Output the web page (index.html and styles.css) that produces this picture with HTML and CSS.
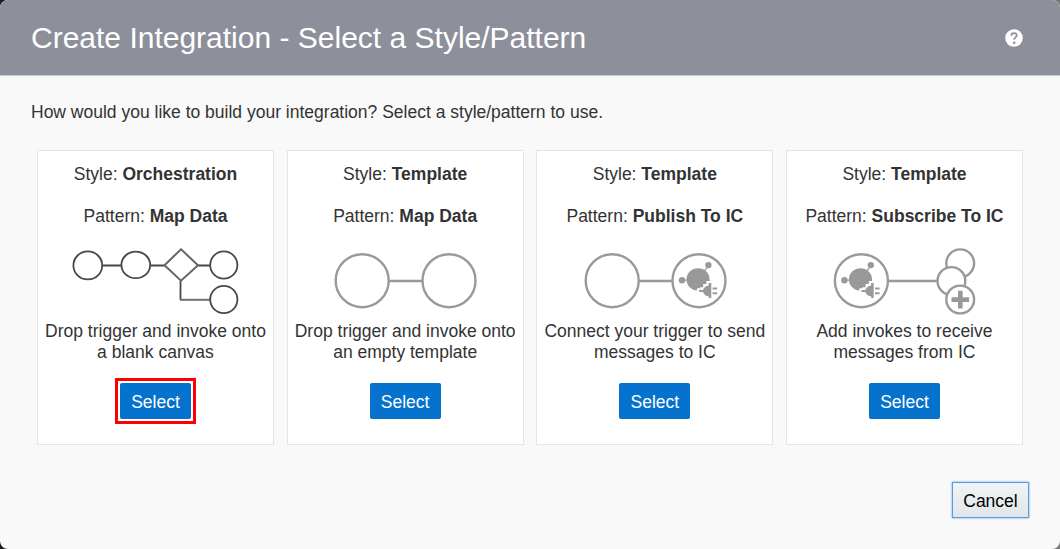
FILE: index.html
```html
<!DOCTYPE html>
<html lang="en">
<head>
<meta charset="utf-8">
<title>Create Integration</title>
<link rel="stylesheet" href="styles.css">
</head>
<body>
<main class="dialog">
  <header class="header">
    <h1 class="title">Create Integration - Select a Style/Pattern</h1>
    <svg class="help" viewBox="0 0 18 18" role="img" aria-label="Help"><circle cx="9" cy="9" r="8.8" fill="#fff"/><path d="M6.3 6.7C6.3 4.9 7.4 4.2 9 4.2s2.7.8 2.7 2.3c0 1.9-2.5 2-2.5 4.2" fill="none" stroke="#8d8f9b" stroke-width="1.8"/><circle cx="9.2" cy="13.7" r="1.3" fill="#8d8f9b"/></svg>
  </header>
  <p class="intro">How would you like to build your integration? Select a style/pattern to use.</p>
  <section class="cards">
    <article class="card">
      <p class="line">Style: <b>Orchestration</b></p>
      <p class="line">Pattern: <b>Map Data</b></p>
      <svg class="diagram" viewBox="37 240 237 80">
        <g fill="none" stroke="#484848" stroke-width="1.8">
          <path d="M102 265.5h19.5M150 265.5h14.5M198 265.5h12M180.5 281v19"/>
          <path d="M180 299.8h30" stroke="#707070" stroke-width="2"/>
          <path d="M181 249.3l17 15.9-17 15.5-16.5-15.5z" stroke="#666" stroke-width="2"/>
          <ellipse cx="87.8" cy="265.4" rx="14.4" ry="14"/><ellipse cx="135.8" cy="264.9" rx="14.4" ry="13.3"/>
          <circle cx="223.8" cy="265" r="13.6"/><circle cx="223.8" cy="299.5" r="13.6"/>
        </g>
      </svg>
      <p class="desc">Drop trigger and invoke onto<br>a blank canvas</p>
      <div class="ring"><button class="select">Select</button></div>
    </article>
    <article class="card">
      <p class="line">Style: <b>Template</b></p>
      <p class="line">Pattern: <b>Map Data</b></p>
      <svg class="diagram" viewBox="287 240 237 80">
        <g fill="none" stroke="#999" stroke-width="2.4"><circle cx="362.2" cy="280.7" r="26.5"/><circle cx="449" cy="280.7" r="26.5"/><path d="M389 281h33"/></g>
      </svg>
      <p class="desc">Drop trigger and invoke onto<br>an empty template</p>
      <div class="ring plain"><button class="select">Select</button></div>
    </article>
    <article class="card">
      <p class="line">Style: <b>Template</b></p>
      <p class="line">Pattern: <b>Publish To IC</b></p>
      <svg class="diagram" viewBox="536 240 237 80">
        <defs>
          <g id="adapter">
            <circle r="26.5" fill="none" stroke="#999" stroke-width="2.4"/>
            <path d="M-17 -.5H-9M5 -9L9.5 -15" fill="none" stroke="#999" stroke-width="1.3"/>
            <circle cx="-17" cy="-.5" r="3.2" fill="#999"/><circle cx="9.4" cy="-15.6" r="3.2" fill="#999"/>
            <path d="M-.6 -12.5A11.2 11.2 0 0 1 10.6 -1.3V.2H7.4V3.4H4.2V6.6H1V7.6H-2V9.9A11.2 11.2 0 0 1 -.6 -12.5z" fill="#999"/>
            <path d="M0 9.3H4Q5.2 5.4 9.7 4.8V2.4H12.3V17.4H9.7V15.6Q5.2 15.2 4 11.3H0z" fill="#999"/>
            <path d="M13.6 7.8H18.2M13.6 12.5H18.2" stroke="#999" stroke-width="2"/>
          </g>
        </defs>
        <circle cx="612.2" cy="280.7" r="26.5" fill="none" stroke="#999" stroke-width="2.4"/><path d="M639 281h33" stroke="#999" stroke-width="2.4"/>
        <use href="#adapter" x="699" y="280.7"/>
      </svg>
      <p class="desc">Connect your trigger to send<br>messages to IC</p>
      <div class="ring plain"><button class="select">Select</button></div>
    </article>
    <article class="card">
      <p class="line">Style: <b>Template</b></p>
      <p class="line">Pattern: <b>Subscribe To IC</b></p>
      <svg class="diagram" viewBox="786 240 237 80">
        <use href="#adapter" x="861.4" y="280.7"/>
        <path d="M888 281h49" stroke="#999" stroke-width="2.4"/>
        <g fill="#fff" stroke="#999" stroke-width="2.4"><circle cx="960.2" cy="263.3" r="13.9"/><circle cx="951.4" cy="281" r="13.9"/><circle cx="960.2" cy="299.5" r="13.9"/></g>
        <path d="M951.5 299.6h17.6M960.3 290.8v17.6" stroke="#999" stroke-width="4.6"/>
      </svg>
      <p class="desc">Add invokes to receive<br>messages from IC</p>
      <div class="ring plain"><button class="select">Select</button></div>
    </article>
  </section>
  <footer class="footer"><button class="cancel">Cancel</button></footer>
</main>
</body>
</html>
```
FILE: styles.css
```css
* { box-sizing: border-box; }
body {
  margin: 0;
  background: linear-gradient(90deg, #1b1a20 50%, #777 50%);
  font: 17.5px/21px "Liberation Sans", Arial, sans-serif;
  color: #333;
}
p, h1 { margin: 0; }
button { font: inherit; }
.dialog {
  height: 549px;
  background: #f9f9f9;
  border-radius: 8px;
  overflow: hidden;
}
.header {
  height: 76px;
  padding: 0 37px 0 31px;
  display: flex;
  align-items: center;
  justify-content: space-between;
  background: #8d8f9b;
  border-bottom: 1px solid #c8c9d5;
}
.title { font-size: 30px; line-height: 36px; padding-top: 1px; font-weight: 400; color: #fff; }
.help { width: 18px; height: 18px; }
.intro { padding: 26px 31px 0; height: 74px; white-space: nowrap; }
.cards {
  display: flex;
  justify-content: space-between;
  padding: 0 37px;
}
.card {
  width: 237px;
  height: 295px;
  padding-top: 13px;
  display: flex;
  flex-direction: column;
  align-items: center;
  background: #fff;
  border: 1px solid #e5e5e5;
  text-align: center;
}
.line { height: 42px; white-space: nowrap; }
.diagram { width: 237px; height: 80px; margin: -8px -1px 0; flex: none; }
.desc { white-space: nowrap; height: 58px; padding-top: 1px; }
.ring { border: 3px solid #f00; padding: 2px; height: 46px; width: 81px; }
.plain { border-color: transparent; }
.select {
  display: block;
  width: 71px;
  height: 36px;
  padding: 2px 0 0;
  border: 0;
  border-radius: 2px;
  background: #0572ce;
  color: #fff;
}
.footer { display: flex; justify-content: flex-end; padding: 37px 31px 0; }
.cancel {
  width: 77px;
  height: 36px;
  padding: 2px 0 0;
  border: 1px solid #5b9ae2;
  background: linear-gradient(#f1f4f5, #e0e6e8);
  box-shadow: 0 0 2px #5b9ae2;
  color: #000;
}
```
